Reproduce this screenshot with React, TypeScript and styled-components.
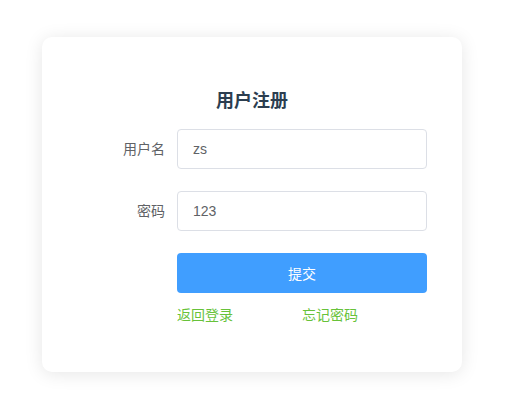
import React, { useState } from 'react';
import styled, { createGlobalStyle } from 'styled-components';

const GlobalStyle = createGlobalStyle`
    body {
        margin: 0;
        background: #fff;
        font-family: "Liberation Sans", "Noto Sans CJK SC", sans-serif;
    }
    * {
        box-sizing: border-box;
    }
`

const Page = styled.div`
    padding: 37px 0 40px 42px;
`

const Card = styled.div`
    width: 420px;
    padding: 52px 35px 47px;
    background: #fff;
    border-radius: 10px;
    box-shadow: 0 2px 18px rgba(0, 0, 0, 0.1);
`

const Title = styled.h3`
    margin: 0 0 16px;
    text-align: center;
    font-size: 18px;
    line-height: 24px;
    font-weight: bold;
    color: #2c3e50;
`

const FormItem = styled.div`
    display: flex;
    margin-bottom: 22px;
`

const Label = styled.label`
    width: 100px;
    padding-right: 12px;
    text-align: right;
    line-height: 40px;
    font-size: 14px;
    color: #606266;
`

const Input = styled.input`
    flex: 1;
    height: 40px;
    padding: 0 15px;
    border: 1px solid #dcdfe6;
    border-radius: 4px;
    outline: none;
    font-family: inherit;
    font-size: 14px;
    color: #606266;
`

const Actions = styled.div`
    margin-left: 100px;
`

const SubmitButton = styled.button`
    display: block;
    width: 100%;
    height: 40px;
    border: none;
    border-radius: 4px;
    background: #409eff;
    color: #fff;
    font-family: inherit;
    font-size: 14px;
    cursor: pointer;
`

const Links = styled.div`
    display: grid;
    grid-template-columns: 1fr 1fr;
    margin-top: 12px;
`

const Link = styled.a`
    font-size: 14px;
    line-height: 20px;
    color: #67c23a;
    text-decoration: none;
    cursor: pointer;
`

const App = () => {
    const [username, setUsername] = useState('zs');
    const [password, setPassword] = useState('123');

    return (
        <>
            <GlobalStyle />
            <Page>
                <Card>
                    <Title>用户注册</Title>
                    <FormItem>
                        <Label>用户名</Label>
                        <Input value={username} onChange={e => setUsername(e.target.value)} />
                    </FormItem>
                    <FormItem>
                        <Label>密码</Label>
                        <Input value={password} onChange={e => setPassword(e.target.value)} />
                    </FormItem>
                    <Actions>
                        <SubmitButton>提交</SubmitButton>
                        <Links>
                            <Link>返回登录</Link>
                            <Link>忘记密码</Link>
                        </Links>
                    </Actions>
                </Card>
            </Page>
        </>
    );
};

export default App;
